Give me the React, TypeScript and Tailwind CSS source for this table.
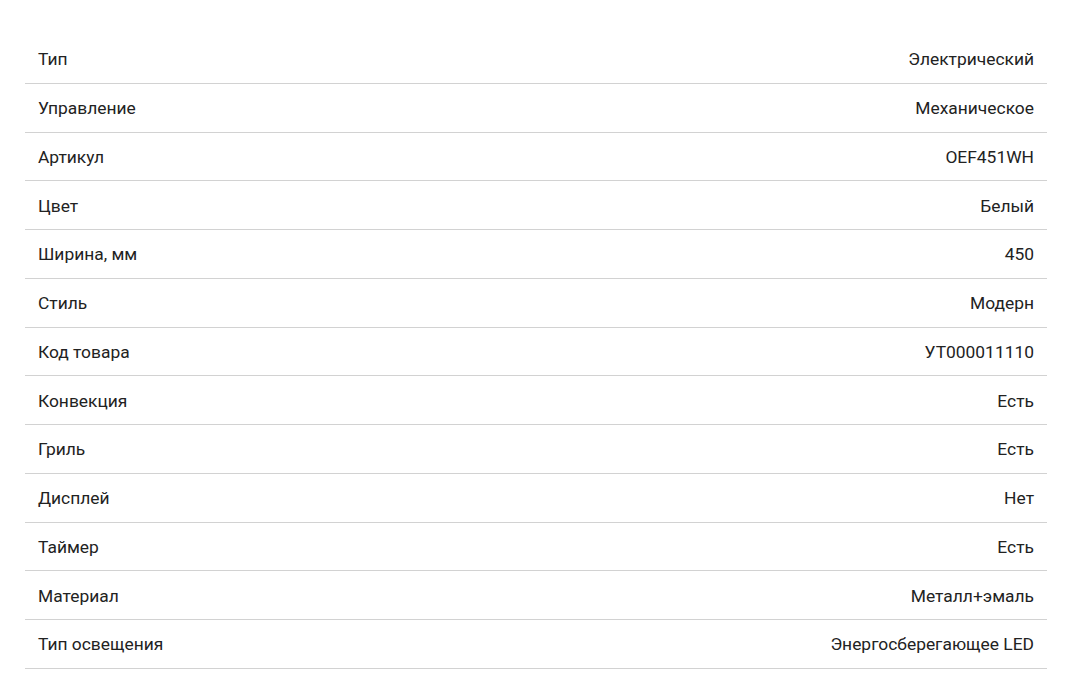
const specs: [string, string][] = [
  ['Тип', 'Электрический'],
  ['Управление', 'Механическое'],
  ['Артикул', 'OEF451WH'],
  ['Цвет', 'Белый'],
  ['Ширина, мм', '450'],
  ['Стиль', 'Модерн'],
  ['Код товара', 'УТ000011110'],
  ['Конвекция', 'Есть'],
  ['Гриль', 'Есть'],
  ['Дисплей', 'Нет'],
  ['Таймер', 'Есть'],
  ['Материал', 'Металл+эмаль'],
  ['Тип освещения', 'Энергосберегающее LED'],
];

export default function App() {
  return (
    <div className="min-h-screen bg-white pt-[35px] pl-[25px] pr-[23px] font-['Roboto',sans-serif] text-[17.4px] text-[#222]">
      <div className="flex flex-col">
        {specs.map(([name, value]) => (
          <div
            key={name}
            className="flex h-[48.75px] items-center justify-between border-b border-[#d2d2d2] px-[13px] pt-[1px]"
          >
            <span>{name}</span>
            <span>{value}</span>
          </div>
        ))}
      </div>
    </div>
  );
}
